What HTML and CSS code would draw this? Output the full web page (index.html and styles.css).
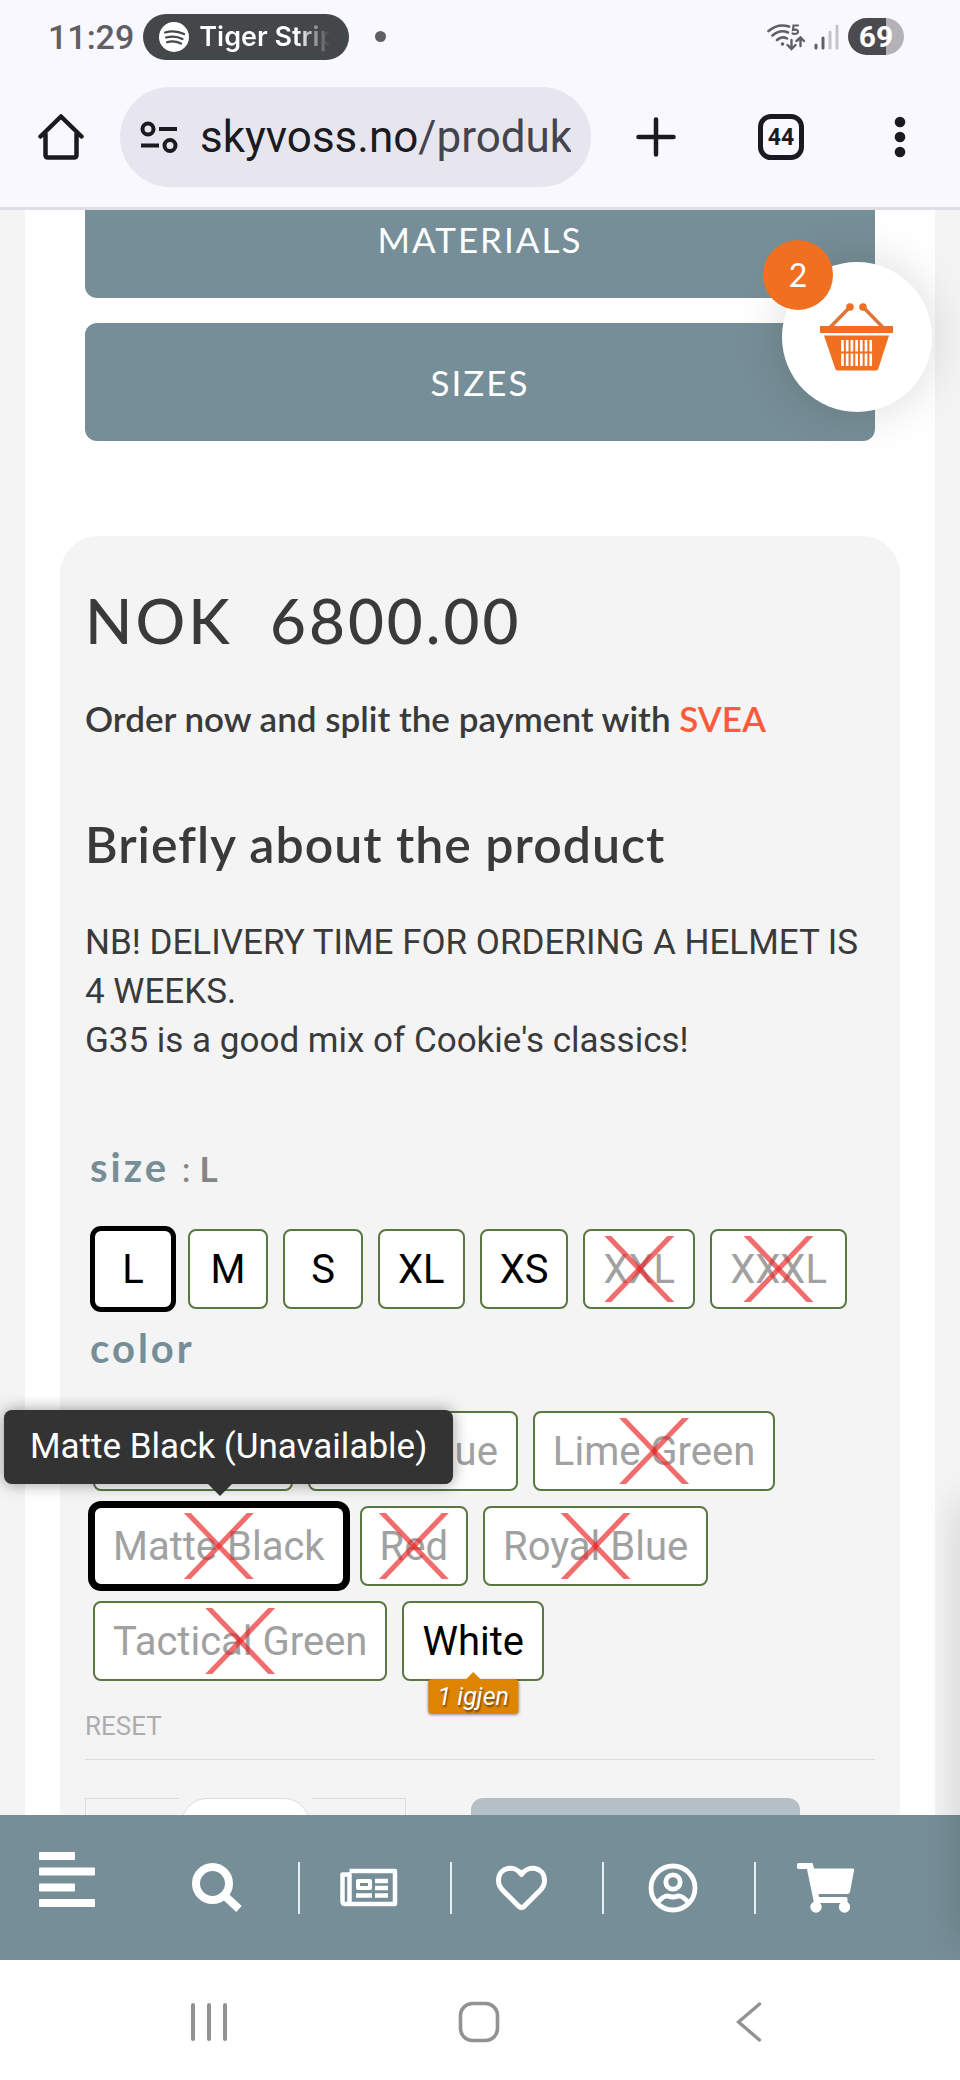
FILE: index.html
```html
<!DOCTYPE html>
<html lang="en">
<head>
  <meta charset="UTF-8" />
  <meta name="viewport" content="width=device-width, initial-scale=1.0"/>
  <title>Skyvoss - G35 Helmet</title>
  <link rel="stylesheet" href="styles.css">
</head>
<body>
  <header class="browser">
    <div class="status-bar">
      <span class="clock">11:29</span>
      <div class="media-chip">
        <svg width="30" height="30" viewBox="0 0 30 30">
          <circle cx="15" cy="15" r="15" fill="#fff"/>
          <path d="M6 10.500Q16 7.500 25 12M7 15.500Q16 13 23.500 17M8 20.200Q15 18.200 22 21.500" fill="none" stroke="#434749" stroke-width="2.200" stroke-linecap="round"/>
        </svg>
        <span class="media-title">Tiger Strip</span>
      </div>
      <span class="status-dot"></span>
      <div class="status-icons">
        <svg width="38" height="28" viewBox="0 0 38 28" fill="none" stroke="#606064" stroke-width="2.600" stroke-linecap="round">
          <path d="M1.500 8Q11 0 22 3.500M5.500 12.500Q13 6 21 9.500M10 17Q15 12.500 20 15.500"/>
          <path d="M31 2.500H26.500L26 7Q31 5.500 31 9Q30 12 25.500 10.500" stroke-width="2.200"/>
          <path d="M24.500 17V25M20.500 22L24.500 26L28.500 22M33.500 23V15M29.500 18L33.500 14.500L37 18" stroke-width="2.400"/>
          <circle cx="15.500" cy="21" r="1.800" fill="#606064" stroke="none"/>
        </svg>
        <svg width="25" height="26" viewBox="0 0 25 26" stroke-width="3" stroke-linecap="round">
          <path d="M2 24V21M9 24V14" stroke="#606064"/>
          <path d="M16 24V8M23 24V2" stroke="#c4c3ca"/>
        </svg>
        <span class="battery">69</span>
      </div>
    </div>

    <div class="toolbar">
      <button class="icon-btn" aria-label="Home">
        <svg width="46" height="46" viewBox="0 0 46 46" fill="none" stroke="#1a1a20" stroke-width="4.500" stroke-linecap="round" stroke-linejoin="round">
          <path d="M2.500 22.500L23 2.500L43.500 22.500M7.500 20V41Q7.500 43.500 10 43.500H36Q38.500 43.500 38.500 41V20"/>
        </svg>
      </button>
      <button class="address">
        <svg width="38" height="32" viewBox="0 0 38 32" fill="none" stroke="#1a1a20" stroke-width="4">
          <circle cx="8" cy="8" r="5.500"/>
          <path d="M19 8H37M1 24.500H19"/>
          <circle cx="30" cy="24.500" r="5.500"/>
        </svg>
        <span class="url">skyvoss.no<span class="path">/produk</span></span>
      </button>
      <button class="icon-btn new-tab" aria-label="New tab">
        <svg width="40" height="40" viewBox="0 0 40 40" stroke="#1a1a20" stroke-width="4.500" stroke-linecap="round">
          <path d="M20 2.500V37.500M2.500 20H37.500"/>
        </svg>
      </button>
      <button class="tab-count">44</button>
      <button class="icon-btn menu-dots" aria-label="Menu">
        <svg width="12" height="42" viewBox="0 0 12 42" fill="#1a1a20">
          <circle cx="6" cy="6" r="5.300"/><circle cx="6" cy="21" r="5.300"/><circle cx="6" cy="36" r="5.300"/>
        </svg>
      </button>
    </div>
  </header>

  <main class="viewport">
    <div class="page">
      <div class="tabs">
        <button class="tab">MATERIALS</button>
        <button class="tab">SIZES</button>
      </div>

      <section class="card">
        <p class="price">NOK&nbsp; 6800.00</p>
        <p class="split">Order now and split the payment with <a href="#">SVEA</a></p>
        <h2>Briefly about the product</h2>
        <p class="desc">NB! DELIVERY TIME FOR ORDERING A HELMET IS 4 WEEKS.<br>G35 is a good mix of Cookie's classics!</p>

        <div class="label size-label">size <span>: <b>L</b></span></div>
        <div class="swatches">
          <button class="swatch selected">L</button>
          <button class="swatch">M</button>
          <button class="swatch">S</button>
          <button class="swatch">XL</button>
          <button class="swatch">XS</button>
          <button class="swatch off"><span>XXL</span></button>
          <button class="swatch off"><span>XXXL</span></button>
        </div>

        <div class="label color-label">color</div>
        <div class="swatches colors">
          <button class="swatch off"><span>Dark Red</span></button>
          <button class="swatch off"><span>Dark Blue</span></button>
          <button class="swatch off"><span>Lime Green</span></button>
          <button class="swatch off active"><span>Matte Black</span><em class="tooltip">Matte Black (Unavailable)</em></button>
          <button class="swatch off"><span>Red</span></button>
          <button class="swatch off"><span>Royal Blue</span></button>
          <button class="swatch off"><span>Tactical Green</span></button>
          <button class="swatch">White<em class="stock">1 igjen</em></button>
        </div>
        <a class="reset" href="#">RESET</a>

        <div class="buy-row">
          <div class="qty">
            <button aria-label="Less"></button>
            <input type="text" aria-label="Quantity">
            <button aria-label="More"></button>
          </div>
          <button class="add-btn" aria-label="Add to cart"></button>
        </div>
      </section>
    </div>

    <button class="float-cart" aria-label="Basket">
      <svg width="74" height="68" viewBox="0 0 74 68">
        <g fill="#f06f20">
          <circle cx="30" cy="4" r="3.800"/><circle cx="43" cy="4" r="3.800"/>
          <path d="M0 23H73V30H0Z"/>
          <path d="M4 32.500H69L58.500 65Q58 67.500 56 67.500H17.500Q15.500 67.500 15 65Z"/>
        </g>
        <path d="M29 5L10 24.500M44 5L63 24.500" stroke="#e07434" stroke-width="3.400"/>
        <path d="M22.500 37V63M27.200 37V63M31.900 37V63M36.600 37V63M41.300 37V63M46 37V63M50.700 37V63" stroke="#fff" stroke-width="2.700"/>
        <path d="M20 49.500H53" stroke="#f06f20" stroke-width="2.200"/>
      </svg>
      <span class="cart-badge">2</span>
    </button>
  </main>

  <nav class="shop-nav">
    <a class="menu-link" href="#" aria-label="Menu">
      <svg width="56" height="56" viewBox="0 0 56 56" fill="#fff">
        <rect width="36" height="8" rx="1"/><rect y="15.500" width="56" height="8" rx="1"/><rect y="31.500" width="36" height="8" rx="1"/><rect y="47" width="56" height="8" rx="1"/>
      </svg>
    </a>
    <a href="#" aria-label="Search">
      <svg width="50" height="50" viewBox="0 0 50 50" fill="none" stroke="#fff">
        <circle cx="20.500" cy="20.500" r="16.500" stroke-width="8"/>
        <path d="M33 33L47 46" stroke-width="8"/>
      </svg>
    </a>
    <a href="#" aria-label="News">
      <svg width="58" height="40" viewBox="0 0 58 40" fill="none" stroke="#fff" stroke-width="4.500" stroke-linejoin="round">
        <path d="M9.500 3H55V36H5Q2.500 36 2.500 33V6.500H9.500V35"/>
        <path d="M18 13H30V20H18Z" stroke-width="4"/>
        <path d="M35 13H48M35 20H48M16 27.500H32M35 27.500H48" stroke-width="4.500"/>
      </svg>
    </a>
    <a href="#" aria-label="Wishlist">
      <svg width="51" height="46" viewBox="0 0 51 46" fill="none" stroke="#fff" stroke-width="5" stroke-linejoin="round">
        <path d="M25.500 9.500C19 -0.500 2.500 1.500 2.500 15.500C2.500 19.500 4 22.500 7 25.500L23 41.500Q25.500 43.500 28 41.500L44 25.500C47 22.500 48.500 19.500 48.500 15.500C48.500 1.500 32 -0.500 25.500 9.500Z"/>
      </svg>
    </a>
    <a href="#" aria-label="Account">
      <svg width="50" height="50" viewBox="0 0 50 50" fill="none" stroke="#fff" stroke-width="4.800">
        <circle cx="25" cy="25" r="22"/>
        <circle cx="25" cy="19" r="7.200"/>
        <path d="M10 39Q16 32.500 20 33Q25 35 30 33Q34 32.500 40 39"/>
      </svg>
    </a>
    <a href="#" aria-label="Cart">
      <svg width="58" height="50" viewBox="0 0 58 50" fill="#fff">
        <path d="M1.500 0H15Q16 0 16 1.500L17 5.500H56Q57.500 5.500 57 7.500L53 29Q52.500 31 50.500 31H21.500L22 34H49Q50.500 34 50.500 35.500V40H17L10 6H1.500Q0 6 0 4.500V1.500Q0 0 1.500 0Z"/>
        <circle cx="19" cy="44" r="5.700"/><circle cx="47.500" cy="44" r="5.700"/>
      </svg>
    </a>
  </nav>

  <div class="drawer-shadow"></div>

  <footer class="system-nav">
    <button class="icon-btn" aria-label="Recents">
      <svg width="38" height="40" viewBox="0 0 38 40" stroke="#929292" stroke-width="4" stroke-linecap="round">
        <path d="M3 3V37M19 3V37M35 3V37"/>
      </svg>
    </button>
    <button class="icon-btn" aria-label="Home screen">
      <svg width="42" height="42" viewBox="0 0 42 42" fill="none" stroke="#929292" stroke-width="3.600">
        <rect x="2.500" y="2.500" width="37" height="37" rx="12"/>
      </svg>
    </button>
    <button class="icon-btn" aria-label="Back">
      <svg width="26" height="42" viewBox="0 0 26 42" fill="none" stroke="#929292" stroke-width="3.400" stroke-linecap="round">
        <path d="M23.500 3L2.500 21L23.500 39"/>
      </svg>
    </button>
  </footer>
</body>
</html>
```
FILE: styles.css
```css
:root {
  --slate: #768e97;
  --ink: #3a3a3a;
  --grey-bg: #f4f4f4;
  --orange: #f06f20;
  --chrome: #f9f8ff;
  --head-font: Lato, sans-serif;
  --body-font: Roboto, sans-serif;
}

* {
  box-sizing: border-box;
}

body {
  margin: 0;
  height: 100vh;
  display: flex;
  flex-direction: column;
  position: relative;
  overflow: hidden;
  font-family: var(--body-font);
  color: var(--ink);
  background: #fff;
}

p, h2 {
  margin: 0;
}

button {
  font-family: inherit;
  border: none;
  padding: 0;
  background: none;
  cursor: pointer;
}

svg {
  display: block;
  flex: none;
}

/* browser chrome */
.browser {
  background: var(--chrome);
  border-bottom: 3px solid #dfdee6;
}

.status-bar {
  display: flex;
  align-items: center;
  height: 73px;
  padding: 0 56px 0 48px;
}

.clock {
  font-size: 34px;
  font-weight: 500;
  color: #606064;
}

.media-chip {
  display: flex;
  align-items: center;
  gap: 10px;
  height: 46px;
  margin-left: 9px;
  padding: 0 19px 0 16px;
  border-radius: 23px;
  background: #434749;
}

.media-title {
  width: 131px;
  overflow: hidden;
  white-space: nowrap;
  font-family: Inter, sans-serif;
  font-size: 27px;
  font-weight: 600;
  color: transparent;
  background: linear-gradient(to right, #fff 75%, #434749);
  background-clip: text;
  -webkit-background-clip: text;
}

.status-dot {
  width: 11px;
  height: 11px;
  margin-left: 26px;
  border-radius: 50%;
  background: #606064;
}

.status-icons {
  display: flex;
  align-items: center;
  gap: 9px;
  margin-left: auto;
}

.battery {
  width: 56px;
  border-radius: 19px;
  background: linear-gradient(to right, #4b4b4e 68%, #b3b2b7 68%);
  color: #fff;
  font-size: 30px;
  font-weight: 700;
  line-height: 37px;
  text-align: center;
}

.toolbar {
  display: flex;
  align-items: center;
  height: 134px;
  padding: 0 54px 6px 38px;
}

.address {
  flex: 1;
  min-width: 0;
  display: flex;
  align-items: center;
  gap: 22px;
  height: 100px;
  margin: 0 45px 0 36px;
  padding: 0 20px;
  border-radius: 50px;
  background: #e7e6ef;
}

.url {
  overflow: hidden;
  white-space: nowrap;
  font-size: 44px;
  color: #1a1a20;
}

.url .path {
  color: #44444e;
}

.tab-count {
  width: 46px;
  height: 46px;
  margin: 0 90px 0 82px;
  border: 5px solid #1a1a20;
  border-radius: 13px;
  color: #1a1a20;
  font-size: 23px;
  font-weight: 700;
}

/* shop page */
.viewport {
  flex: 1;
  min-height: 0;
  position: relative;
  overflow: hidden;
  padding: 0 25px;
  background: var(--grey-bg);
}

.page {
  margin-top: -30px;
  padding: 0 35px;
  background: #fff;
}

.tabs {
  display: flex;
  flex-direction: column;
  gap: 25px;
  padding: 0 25px;
  margin-bottom: 95px;
}

.tab {
  height: 118px;
  border-radius: 12px;
  background: var(--slate);
  color: #fff;
  font-family: var(--head-font);
  font-size: 35px;
  letter-spacing: 2px;
}

.card {
  padding: 48px 25px 60px;
  border-radius: 38px 38px 0 0;
  background: var(--grey-bg);
}

.price {
  font-family: var(--head-font);
  font-size: 62px;
  line-height: 72px;
  font-weight: 500;
  letter-spacing: 3px;
}

.split {
  margin-top: 38px;
  font-family: var(--head-font);
  font-size: 35px;
  line-height: 48px;
  font-weight: 600;
}

.split a {
  color: #fb5b39;
  text-decoration: none;
}

h2 {
  margin-top: 70px;
  font-family: var(--head-font);
  font-size: 50px;
  line-height: 64px;
  font-weight: 600;
  letter-spacing: 1px;
}

.desc {
  margin-top: 42px;
  font-size: 35px;
  line-height: 49px;
}

.label {
  padding-left: 5px;
  font-family: var(--head-font);
  font-size: 40px;
  line-height: 48px;
  font-weight: 700;
  letter-spacing: 3px;
  color: var(--slate);
}

.label span {
  font-size: 35px;
  font-weight: 400;
  letter-spacing: 0;
  color: #858585;
}

.size-label {
  margin-top: 78px;
}

.color-label {
  margin-top: 15px;
}

.swatches {
  display: flex;
  flex-wrap: wrap;
  gap: 15px;
  margin-top: 37px;
  padding-left: 8px;
}

.colors {
  margin-top: 39px;
}

.swatch {
  position: relative;
  min-width: 80px;
  height: 80px;
  padding: 0 18px;
  border: 2px solid #5a7741;
  border-radius: 8px;
  background: #fff;
  color: #000;
  font-size: 40px;
}

.swatch.selected {
  border-color: #000;
  box-shadow: 0 0 0 3px #000;
}

.swatch.active {
  border-color: #000;
  box-shadow: 0 0 0 5px #000;
}

.swatch.off > span {
  color: #a1a1a1;
}

.swatch.off::before,
.swatch.off::after {
  content: "";
  position: absolute;
  inset: 5px calc(50% - 35px);
  background: rgba(235, 40, 40, 0.68);
  clip-path: polygon(0 0, 10% 0, 100% 100%, 90% 100%);
}

.swatch.off::after {
  clip-path: polygon(90% 0, 100% 0, 10% 100%, 0 100%);
}

.tooltip {
  position: absolute;
  z-index: 2;
  left: -91px;
  bottom: calc(100% + 24px);
  padding: 0 26px;
  border-radius: 8px;
  background: #333;
  box-shadow: 0 0 16px rgba(0, 0, 0, 0.4);
  color: #fff;
  font-size: 35px;
  font-style: normal;
  line-height: 74px;
  white-space: nowrap;
}

.tooltip::after {
  content: "";
  position: absolute;
  top: 100%;
  left: 48%;
  margin-left: -12px;
  border: 12px solid transparent;
  border-top-color: #333;
  border-bottom: none;
}

.stock {
  position: absolute;
  top: 76px;
  left: 50%;
  transform: translateX(-50%);
  padding: 0 9px;
  border-radius: 4px;
  background: #dd8500;
  box-shadow: 0 1px 3px rgba(0, 0, 0, 0.4);
  color: #fff;
  font-size: 25px;
  line-height: 35px;
  text-shadow: 1px 2px 2px rgba(0, 0, 0, 0.5);
  white-space: nowrap;
}

.stock::before {
  content: "";
  position: absolute;
  bottom: 100%;
  left: 50%;
  margin-left: -7px;
  border: 7px solid transparent;
  border-bottom-color: #dd8500;
  border-top: none;
}

.reset {
  display: block;
  margin-top: 29px;
  padding-bottom: 17px;
  border-bottom: 1px solid #dcdcdc;
  color: #adadad;
  font-size: 26px;
  line-height: 32px;
  text-decoration: none;
}

.buy-row {
  display: flex;
  gap: 65px;
  margin-top: 38px;
}

.qty {
  display: flex;
  width: 321px;
  height: 80px;
}

.qty button {
  flex: 3;
  border: 1px solid #dcdcdc;
}

.qty button:first-child {
  border-right: none;
}

.qty button:last-child {
  border-left: none;
}

.qty input {
  flex: 4;
  min-width: 0;
  margin: 0 2px;
  border: 1px solid #dcdcdc;
  border-radius: 26px;
  background: #fff;
}

.add-btn {
  width: 329px;
  height: 80px;
  border-radius: 12px;
  background: #b5bfc7;
}

.float-cart {
  position: absolute;
  top: 52px;
  right: 28px;
  display: grid;
  place-items: center;
  width: 150px;
  height: 150px;
  border-radius: 50%;
  background: #fff;
  box-shadow: 0 0 50px rgba(0, 0, 0, 0.15);
}

.cart-badge {
  position: absolute;
  top: -22px;
  left: -19px;
  width: 70px;
  border-radius: 50%;
  background: var(--orange);
  color: #fff;
  font-family: var(--head-font);
  font-size: 32px;
  line-height: 70px;
}

/* bottom bars */
.shop-nav {
  display: grid;
  grid-template-columns: 148fr repeat(5, 152fr) 52fr;
  align-items: center;
  height: 145px;
  background: var(--slate);
}

.shop-nav a {
  display: grid;
  place-items: center;
  height: 52px;
  padding-right: 12px;
}

.shop-nav a + a {
  border-right: 2px solid rgba(255, 255, 255, 0.85);
}

.shop-nav a:last-child {
  border-right: none;
}

.shop-nav .menu-link {
  height: 72px;
  padding: 0 14px 16px 0;
}

.drawer-shadow {
  position: absolute;
  right: -20px;
  bottom: 140px;
  width: 20px;
  height: 440px;
  box-shadow: 0 0 36px rgba(0, 0, 0, 0.2);
}

.system-nav {
  position: relative;
  display: grid;
  grid-template-columns: repeat(3, 1fr);
  justify-items: center;
  align-items: center;
  height: 120px;
  padding: 3px 76px 0 74px;
  background: #fff;
}
```
